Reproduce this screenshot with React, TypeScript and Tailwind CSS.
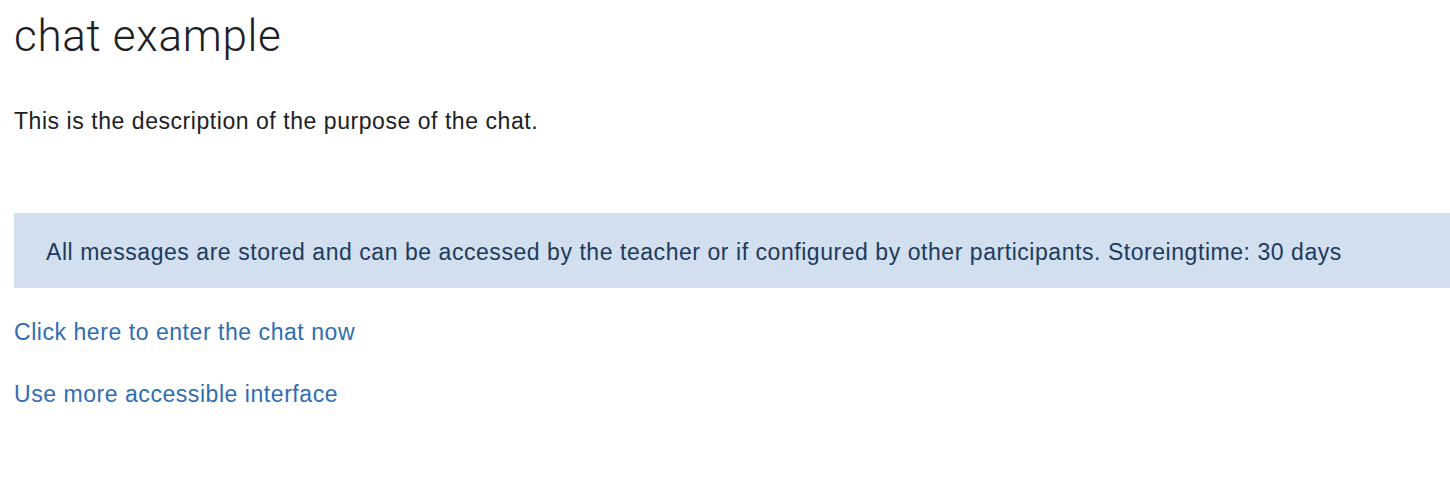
export default function App() {
  return (
    <div className="min-h-[482px] bg-white pl-[14px] text-[#1d2125]" style={{ fontFamily: '"Liberation Sans", Arial, sans-serif' }}>
      <h2 className="pt-[10px] text-[44px] font-light leading-[52px] tracking-[0.7px] text-[#1d2125]" style={{ fontFamily: 'Roboto, "Liberation Sans", sans-serif' }}>chat example</h2>
      <p className="mt-[44px] text-[23px] leading-[30px] tracking-[0.55px]">This is the description of the purpose of the chat.</p>
      <div className="mt-[77px] flex h-[75px] items-center bg-[#d1dfee] pl-[32px] pt-[4px] text-[23px] tracking-[0.55px] text-[#1e3a5c]">
        All messages are stored and can be accessed by the teacher or if configured by other participants. Storeingtime: 30 days
      </div>
      <div className="mt-[29px] text-[23px] leading-[30px] tracking-[0.55px] text-[#2f6db3]">
        <a href="#">Click here to enter the chat now</a>
      </div>
      <div className="mt-[32px] text-[23px] leading-[30px] tracking-[0.55px] text-[#2f6db3]">
        <a href="#">Use more accessible interface</a>
      </div>
    </div>
  );
}
